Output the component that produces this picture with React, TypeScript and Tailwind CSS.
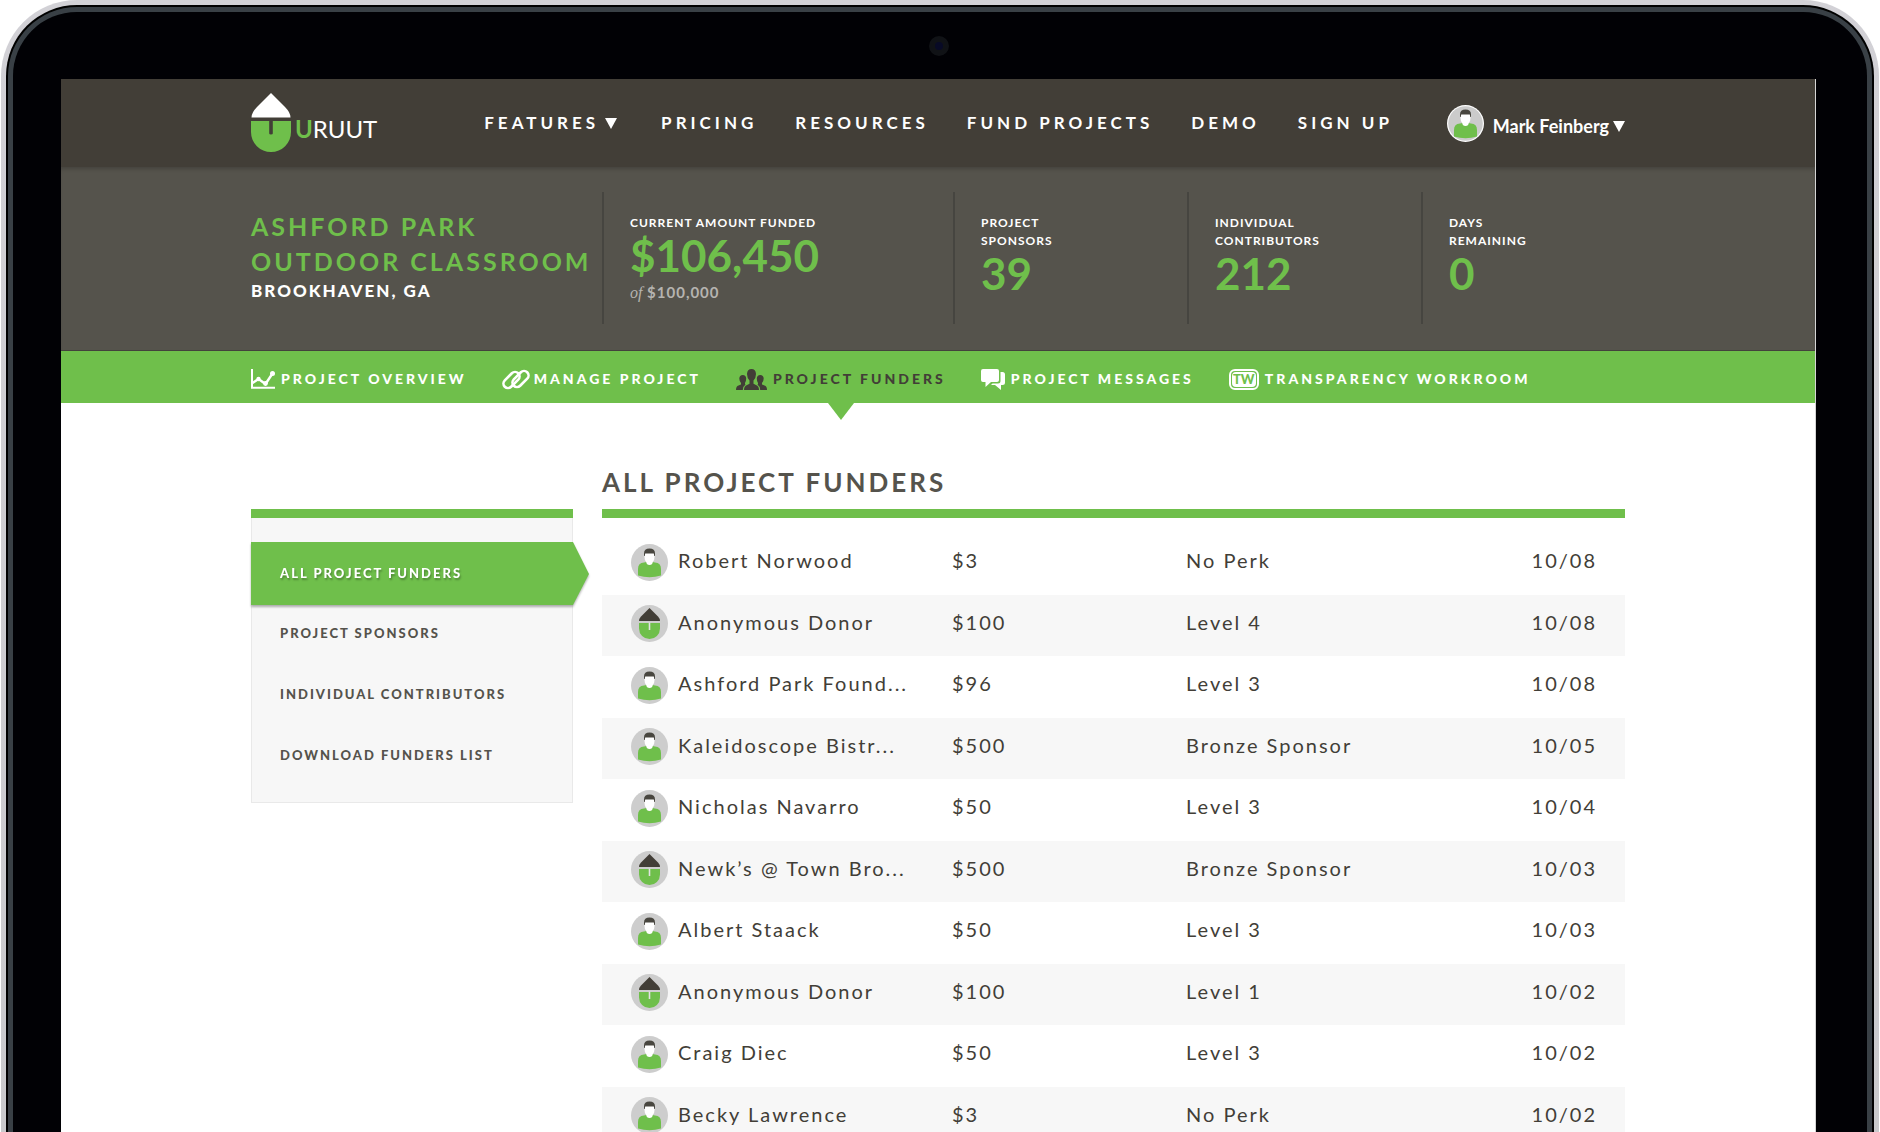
import React from "react";

const navLinks = ["PRICING", "RESOURCES", "FUND PROJECTS", "DEMO", "SIGN UP"];

const funders = [
  { name: "Robert Norwood", amount: "$3", perk: "No Perk", date: "10/08", anonymous: false },
  { name: "Anonymous Donor", amount: "$100", perk: "Level 4", date: "10/08", anonymous: true },
  { name: "Ashford Park Found...", amount: "$96", perk: "Level 3", date: "10/08", anonymous: false },
  { name: "Kaleidoscope Bistr...", amount: "$500", perk: "Bronze Sponsor", date: "10/05", anonymous: false },
  { name: "Nicholas Navarro", amount: "$50", perk: "Level 3", date: "10/04", anonymous: false },
  { name: "Newk’s @ Town Bro...", amount: "$500", perk: "Bronze Sponsor", date: "10/03", anonymous: true },
  { name: "Albert Staack", amount: "$50", perk: "Level 3", date: "10/03", anonymous: false },
  { name: "Anonymous Donor", amount: "$100", perk: "Level 1", date: "10/02", anonymous: true },
  { name: "Craig Diec", amount: "$50", perk: "Level 3", date: "10/02", anonymous: false },
  { name: "Becky Lawrence", amount: "$3", perk: "No Perk", date: "10/02", anonymous: false },
];

function LogoMark() {
  return (
    <svg viewBox="0 0 40 60" className="h-[60px] w-10" aria-hidden="true">
      <path d="M20 0 L34 14 Q39.5 19.500 39.500 24.500 H.5 Q.5 19.500 6 14 Z" fill="#fff" />
      <path d="M0 28 H18.200 V40.500 Q18.200 41.500 20 41.500 Q21.800 41.500 21.800 40.500 V28 H40 V39 A20 20 0 0 1 0 39 Z" fill="#6fbf4b" />
    </svg>
  );
}

function PersonAvatar({ ring = false }: { ring?: boolean }) {
  return (
    <svg viewBox="0 0 37 37" className="size-[37px] shrink-0" aria-hidden="true">
      <circle cx="18.500" cy="18.500" r="18.500" fill={ring ? "#fff" : "#cdcdcd"} />
      {ring && <circle cx="18.500" cy="18.500" r="17.300" fill="#cbcbcb" />}
      <path d="M7 31.500 V25 Q7 19 13 18.600 L15.500 18 H21.500 L24 18.600 Q30 19 30 25 V31.500 Q18.500 35 7 31.500 Z" fill="#6fbf4b" />
      <path d="M13.500 9 H23.500 V13 Q23.500 16.500 21.800 18 Q21.500 21 18.500 21 Q15.500 21 15.200 18 Q13.500 16.500 13.500 13 Z" fill="#fff" />
      <path d="M13 12 V9.500 Q13 4.500 18.500 4.500 Q24 4.500 24 9.500 V12 H23.300 L22.800 9.400 H14.200 L13.700 12 Z" fill="#48463f" />
    </svg>
  );
}

function AcornAvatar() {
  return (
    <svg viewBox="0 0 37 37" className="size-[37px] shrink-0" aria-hidden="true">
      <circle cx="18.500" cy="18.500" r="18.500" fill="#cdcdcd" />
      <path d="M18.500 3 L27 11.500 Q29 13.500 29 16 H8 Q8 13.500 10 11.500 Z" fill="#423e37" />
      <path d="M8 18 H29 V23.500 A10.500 10.500 0 0 1 8 23.500 Z" fill="#6fbf4b" />
      <path d="M18.500 17.500 V25" stroke="#e2e2e2" strokeWidth="1.600" />
    </svg>
  );
}

function ChartIcon() {
  return (
    <svg viewBox="0 0 24 20" className="h-5 w-6" fill="none" stroke="#fff" aria-hidden="true">
      <path d="M1 0 V18.800 H24" strokeWidth="2" />
      <path d="M1.500 14 L7.500 10 L14.500 15 L21.500 4.500" strokeWidth="2.400" />
      <g fill="#fff" stroke="none">
        <circle cx="7.500" cy="10" r="2.200" />
        <circle cx="14.500" cy="14.500" r="2.400" />
        <circle cx="21.500" cy="4.500" r="2.500" />
      </g>
    </svg>
  );
}

function ChainIcon() {
  return (
    <svg viewBox="0 0 28 21" className="h-[21px] w-7" fill="none" aria-hidden="true">
      <rect x="0" y="6.500" width="19" height="9" rx="4.500" transform="rotate(-45 9.500 11)" stroke="#fff" strokeWidth="2.600" />
      <rect x="9" y="5.500" width="19" height="9" rx="4.500" transform="rotate(-45 18.500 10)" stroke="#6fbf4b" strokeWidth="4.600" strokeDasharray="9 38" strokeDashoffset="-22" />
      <rect x="9" y="5.500" width="19" height="9" rx="4.500" transform="rotate(-45 18.500 10)" stroke="#fff" strokeWidth="2.600" />
    </svg>
  );
}

function PeopleIcon() {
  return (
    <svg viewBox="0 0 31 21" className="h-[21px] w-[31px]" fill="#423e37" aria-hidden="true">
      <path d="M0 21 Q0 17.500 2.500 16.600 L5 15.400 V14 Q3.300 12 3.300 9.500 Q3.500 6 6.800 6 Q10 6 10.200 9.500 Q10.200 12 9 14 V15.300 L9.600 15.600 Q7 17.200 6.800 21 Z" />
      <path d="M31 21 Q31 17.500 28.500 16.600 L26 15.400 V14 Q27.700 12 27.700 9.500 Q27.500 6 24.200 6 Q21 6 20.800 9.500 Q20.800 12 22 14 V15.300 L21.400 15.600 Q24 17.200 24.200 21 Z" />
      <path d="M8 21 Q8 17 11 16 L13.500 14.800 V11.500 Q11 8.800 11 5 Q11.300 0 15.500 0 Q19.700 0 20 5 Q20 8.800 17.500 11.500 V14.800 L20 16 Q23 17 23 21 Z" />
    </svg>
  );
}

function ChatIcon() {
  return (
    <svg viewBox="0 0 24 21" className="h-[21px] w-6" fill="#fff" aria-hidden="true">
      <path d="M2 0 H16 Q18 0 18 2 V11 Q18 13 16 13 H10 L4.500 18 V13 H2 Q0 13 0 11 V2 Q0 0 2 0 Z" />
      <path d="M19.500 3 H21.500 Q24 3 24 5.500 V13.500 Q24 16 21.500 16 H20 V21 L14 16 H10 L11.500 14.500 H17 Q19.500 14.500 19.500 12 Z" />
    </svg>
  );
}

function WorkroomIcon() {
  return (
    <span className="block rounded-md border-2 border-white p-px" aria-hidden="true">
      <span className="flex h-[15px] w-6 items-center justify-center rounded-sm bg-white text-[13px] leading-none font-black tracking-normal text-[#6fbf4b]">TW</span>
    </span>
  );
}

function Caret() {
  return (
    <svg viewBox="0 0 12 11" className="h-[11px] w-3" fill="currentColor" aria-hidden="true">
      <path d="M0 0 H12 L6 11 Z" />
    </svg>
  );
}

function Header() {
  return (
    <header className="bg-[#423e37] px-6 text-white">
      <div className="mx-auto flex h-[88px] max-w-[1374px] items-center">
        <a href="#home" className="flex items-center gap-1" aria-label="Uruut home">
          <LogoMark />
          <span className="pt-3 text-2xl leading-6">
            <span className="font-bold text-[#6fbf4b]">U</span>RUUT
          </span>
        </a>
        <nav className="ml-[107px] flex items-center gap-[38px] text-[17px] font-bold tracking-[4px] whitespace-nowrap">
          <button type="button" className="mr-1.5 flex items-center gap-1.5 tracking-[4px]">
            FEATURES
            <Caret />
          </button>
          {navLinks.map((link) => (
            <a key={link} href="#nav">{link}</a>
          ))}
        </nav>
        <button type="button" className="ml-auto flex items-center gap-[9px] text-lg leading-6 font-bold whitespace-nowrap">
          <PersonAvatar ring />
          <span className="flex items-center gap-1 pt-1.5">
            Mark Feinberg
            <Caret />
          </span>
        </button>
      </div>
    </header>
  );
}

function Stat({ label, value, children }: { label: React.ReactNode; value: string; children?: React.ReactNode }) {
  return (
    <div className="h-[132px] border-l-2 border-[#464540] pt-[22px] pl-[26px]">
      <div className="text-xs leading-[18px] font-bold tracking-[1px] text-white">{label}</div>
      <div className="text-[44px] leading-[46px] font-bold text-[#6fbf4b]">{value}</div>
      {children}
    </div>
  );
}

function ProjectSummary() {
  return (
    <section className="border-b border-[#43423c] bg-[#55534c] px-6 pt-[25px] pb-[26px] shadow-[inset_0_4px_4px_-2px_rgba(0,0,0,0.2)]">
      <div className="mx-auto grid max-w-[1374px] grid-cols-[351fr_351fr_234fr_234fr_204fr]">
        <div className="pt-[17px] whitespace-nowrap">
          <h1 className="text-[25px] leading-[35px] font-bold tracking-[3px] text-[#6fbf4b]">
            ASHFORD PARK
            <br />
            OUTDOOR CLASSROOM
          </h1>
          <p className="text-[17px] leading-6 font-black tracking-[2px] text-white">BROOKHAVEN, GA</p>
        </div>
        <Stat label="CURRENT AMOUNT FUNDED" value="$106,450">
          <p className="text-[15px] leading-7 font-bold tracking-[1px] text-[#b5b4b0]">
            <em className="font-['Liberation_Serif',serif] text-base font-normal tracking-normal">of</em> $100,000
          </p>
        </Stat>
        <Stat label={<>PROJECT<br />SPONSORS</>} value="39" />
        <Stat label={<>INDIVIDUAL<br />CONTRIBUTORS</>} value="212" />
        <Stat label={<>DAYS<br />REMAINING</>} value="0" />
      </div>
    </section>
  );
}

const tabs = [
  { label: "PROJECT OVERVIEW", icon: <ChartIcon />, gap: "gap-1.5", active: false },
  { label: "MANAGE PROJECT", icon: <ChainIcon />, gap: "gap-1", active: false },
  { label: "PROJECT FUNDERS", icon: <PeopleIcon />, gap: "gap-1.5", active: true },
  { label: "PROJECT MESSAGES", icon: <ChatIcon />, gap: "gap-1.5", active: false },
  { label: "TRANSPARENCY WORKROOM", icon: <WorkroomIcon />, gap: "gap-1.5", active: false },
];

function ProjectTabs() {
  return (
    <nav className="bg-[#6fbf4b] px-6">
      <ul className="mx-auto flex h-[52px] max-w-[1374px] items-center gap-[35px] text-sm font-black tracking-[3px] whitespace-nowrap text-white">
        {tabs.map((tab) => (
          <li key={tab.label} className="relative flex h-full items-center pt-1">
            <a href="#tab" aria-current={tab.active ? "page" : undefined} className={`flex items-center ${tab.gap} ${tab.active ? "text-[#423e37]" : ""}`}>
              {tab.icon}
              {tab.label}
            </a>
            {tab.active && (
              <svg viewBox="0 0 26 17" className="absolute top-full left-1/2 h-[17px] w-[26px] -translate-x-1/2" aria-hidden="true">
                <path d="M0 0 H26 L13 17 Z" fill="#6fbf4b" />
              </svg>
            )}
          </li>
        ))}
      </ul>
    </nav>
  );
}

const filters = ["PROJECT SPONSORS", "INDIVIDUAL CONTRIBUTORS", "DOWNLOAD FUNDERS LIST"];

function Sidebar() {
  return (
    <aside className="mt-[106px] w-[322px] shrink-0 self-start border-t-[9px] border-[#6fbf4b] text-[13px] font-black tracking-[2px]">
      <ul className="border border-t-0 border-[#e9e9e9] bg-[#f7f7f7] pt-6 pb-[14px] text-[#55534c]">
        <li className="relative -mx-px drop-shadow-[0_2px_1px_rgba(0,0,0,0.3)]">
          <a href="#all" aria-current="true" className="flex h-[63px] items-center bg-[#6fbf4b] pl-[29px] text-white [text-shadow:1px_2px_2px_rgba(0,0,0,0.3)]">
            ALL PROJECT FUNDERS
          </a>
          <svg viewBox="0 0 16 63" className="absolute top-0 left-full h-[63px] w-4" aria-hidden="true">
            <path d="M0 0 L16 32 L0 63 Z" fill="#6fbf4b" />
          </svg>
        </li>
        {filters.map((filter) => (
          <li key={filter}>
            <a href="#filter" className="flex h-[61px] items-center pb-1 pl-7">{filter}</a>
          </li>
        ))}
      </ul>
    </aside>
  );
}

function FundersTable() {
  return (
    <section className="min-w-0 flex-1 pt-[62px]">
      <h2 className="border-b-[9px] border-[#6fbf4b] pb-[9px] text-[26px] leading-[35px] font-bold tracking-[3px] text-[#55534c]">ALL PROJECT FUNDERS</h2>
      <table className="mt-[15px] w-full table-fixed text-left text-xl leading-6 tracking-[2px] whitespace-nowrap text-[#423e37]" aria-label="All project funders">
        <colgroup>
          <col className="w-[350px]" />
          <col className="w-[234px]" />
          <col />
          <col className="w-[140px]" />
        </colgroup>
        <tbody>
          {funders.map((funder, index) => (
            <tr key={index} className="h-[62px] even:h-[61px] even:bg-[#f7f7f7]">
              <th scope="row" className="pb-1 pl-[29px] font-normal">
                <span className="flex items-center gap-[10px]">
                  {funder.anonymous ? <AcornAvatar /> : <PersonAvatar />}
                  <span className="pb-1">{funder.name}</span>
                </span>
              </th>
              <td className="pb-2">{funder.amount}</td>
              <td className="pb-2">{funder.perk}</td>
              <td className="pr-7 pb-2 text-right">{funder.date}</td>
            </tr>
          ))}
        </tbody>
      </table>
    </section>
  );
}

export default function App() {
  return (
    <div className="h-screen overflow-hidden bg-white px-px font-['Lato',sans-serif]">
      <div className="h-full rounded-t-[76px] bg-linear-to-b from-[#d2d1d6] to-[#c9c9cc] px-[5px] pt-[5px]">
        <div className="h-full rounded-t-[71px] bg-black px-0.5 pt-0.5">
          <div className="flex h-full flex-col rounded-t-[69px] border-x-[5px] border-t-[5px] border-[#394046] bg-[#010105] pr-[51px] pl-12">
            <div className="flex h-[67px] shrink-0 items-center justify-center">
              <div className="flex size-5 items-center justify-center rounded-full bg-[#101216]">
                <div className="size-2 rounded-full bg-[#080a26]" />
              </div>
            </div>
            <main className="min-h-0 flex-1 overflow-y-auto border-r border-[#d5d5d5] bg-white [scrollbar-width:none]">
              <Header />
              <ProjectSummary />
              <ProjectTabs />
              <div className="px-6">
                <div className="mx-auto flex max-w-[1374px] gap-[29px]">
                  <Sidebar />
                  <FundersTable />
                </div>
              </div>
            </main>
          </div>
        </div>
      </div>
    </div>
  );
}
